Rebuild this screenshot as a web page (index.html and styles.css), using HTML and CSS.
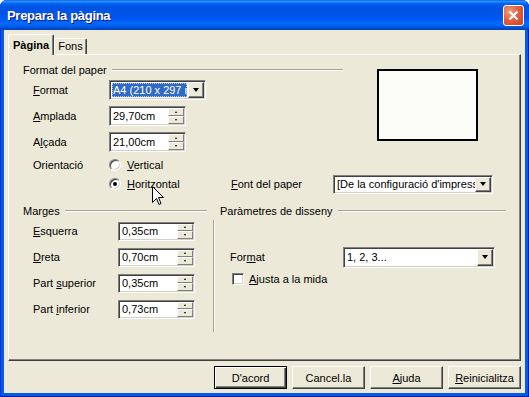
FILE: index.html
```html
<!DOCTYPE html>
<html>
<head>
 <meta charset="UTF-8">
 <title>Prepara la pàgina</title>
 <link rel="stylesheet" href="styles.css">
</head>
<body>
<div class="window">
    <div class="titlebar">
        <span class="title">Prepara la pàgina</span>
        <span class="close">
            <svg width="11" height="11" viewBox="0 0 11 11"><path d="M1.5 1.5l8 8M9.5 1.5l-8 8" stroke="#fff" stroke-width="2.2"/></svg>
        </span>
    </div>

    <div class="client">
        <div class="tabs">
            <div class="tab active">Pàgina</div>
            <div class="tab fons">Fons</div>
        </div>

        <div class="panel">
            <!-- Format del paper -->
            <div class="paper-area">
                <div class="paper">
                    <div class="group-title"><span>Format del paper</span><span class="rule"></span></div>
                    <div class="row">
                        <span class="lbl"><u>F</u>ormat</span>
                        <div class="field combo w-format">
                            <span class="value selected">A4 (210 x 297 mm)</span>
                            <span class="drop"><i class="arrow"></i></span>
                        </div>
                    </div>
                    <div class="row">
                        <span class="lbl"><u>A</u>mplada</span>
                        <div class="field spin">
                            <span class="value">29,70cm</span>
                            <span class="spinner"><span><i class="up"></i></span><span><i class="down"></i></span></span>
                        </div>
                    </div>
                    <div class="row">
                        <span class="lbl">A<u>l</u>çada</span>
                        <div class="field spin">
                            <span class="value">21,00cm</span>
                            <span class="spinner"><span><i class="up"></i></span><span><i class="down"></i></span></span>
                        </div>
                    </div>
                    <div class="row radio-row">
                        <span class="lbl">Orientació</span>
                        <span class="radio"></span><span class="opt-text"><u>V</u>ertical</span>
                    </div>
                </div>
                <div class="preview"></div>
            </div>

            <div class="row radio-row horiz">
                <span class="lbl"></span>
                <span class="option"><span class="radio checked"></span><span class="opt-text"><u>H</u>oritzontal</span></span>
                <span class="lbl-font"><u>F</u>ont del paper</span>
                <div class="field combo w-font">
                    <span class="value">[De la configuració d'impressora]</span>
                    <span class="drop"><i class="arrow"></i></span>
                </div>
            </div>

            <div class="lower">
                <!-- Marges -->
                <div class="margins">
                    <div class="group-title"><span>Marges</span><span class="rule"></span></div>
                    <div class="row">
                        <span class="lbl wide"><u>E</u>squerra</span>
                        <div class="field spin small">
                            <span class="value">0,35cm</span>
                            <span class="spinner"><span><i class="up"></i></span><span><i class="down"></i></span></span>
                        </div>
                    </div>
                    <div class="row">
                        <span class="lbl wide"><u>D</u>reta</span>
                        <div class="field spin small">
                            <span class="value">0,70cm</span>
                            <span class="spinner"><span><i class="up"></i></span><span><i class="down"></i></span></span>
                        </div>
                    </div>
                    <div class="row">
                        <span class="lbl wide">Part <u>s</u>uperior</span>
                        <div class="field spin small">
                            <span class="value">0,35cm</span>
                            <span class="spinner"><span><i class="up"></i></span><span><i class="down"></i></span></span>
                        </div>
                    </div>
                    <div class="row">
                        <span class="lbl wide">Part <u>i</u>nferior</span>
                        <div class="field spin small">
                            <span class="value">0,73cm</span>
                            <span class="spinner"><span><i class="up"></i></span><span><i class="down"></i></span></span>
                        </div>
                    </div>
                </div>

                <div class="vline"></div>

                <!-- Paràmetres de disseny -->
                <div class="design">
                    <div class="group-title"><span>Paràmetres de disseny</span><span class="rule"></span></div>
                    <div class="spacer"></div>
                    <div class="row">
                        <span class="lbl design-lbl">For<u>m</u>at</span>
                        <div class="field combo w-design">
                            <span class="value">1, 2, 3...</span>
                            <span class="drop"><i class="arrow"></i></span>
                        </div>
                    </div>
                    <div class="check-row">
                        <span class="checkbox"></span><span class="opt-text"><u>A</u>justa a la mida</span>
                    </div>
                </div>
            </div>
        </div>

        <div class="buttons">
            <button class="btn default">D'acord</button>
            <button class="btn">Cancel.la</button>
            <button class="btn"><u>A</u>juda</button>
            <button class="btn"><u>R</u>einicialitza</button>
        </div>
    </div>

    <svg class="cursor" width="12" height="20" viewBox="0 0 12 20"><path d="M0.5 0.5V16.5L4.5 12.5L7 18.5L9 17.5L6.5 11.5H11.5Z" fill="#fff" stroke="#000"/></svg>
</div>
</body>
</html>
```

FILE: styles.css
```css
* {
    margin: 0;
    padding: 0;
    box-sizing: border-box;
}

body {
    background: #fff;
    font-family: "Liberation Sans", Arial, sans-serif;
    font-size: 11px;
    color: #000;
}

.window {
    position: relative;
    width: 529px;
    height: 397px;
    display: flex;
    flex-direction: column;
    background: #0858E6;
    border-radius: 7px 7px 0 0;
    overflow: hidden;
    box-shadow: inset 1px 0 0 #0831D9, inset -1px 0 0 #001EA0, inset 0 -1px 0 #001EA0;
}

.titlebar {
    flex: none;
    height: 30px;
    display: flex;
    align-items: center;
    justify-content: space-between;
    padding: 0 5px 0 7px;
    background: linear-gradient(to bottom, #0058EE 0%, #3593FF 4%, #288EFF 6%, #127DFF 8%, #036FFC 10%, #0262EE 14%, #0057E5 20%, #0054E3 24%, #0055EB 56%, #005BF5 66%, #026AFE 76%, #0062EF 86%, #0052D6 92%, #0047C4 96%, #0046C0 100%);
}

.title {
    color: #fff;
    font-weight: bold;
    font-size: 13px;
    letter-spacing: -0.3px;
    text-shadow: 1px 1px 0 #0A1883;
}

.close {
    width: 21px;
    height: 21px;
    border: 1px solid #fff;
    border-radius: 3px;
    background: radial-gradient(circle at 30% 30%, #F09D85 0%, #E5603F 45%, #C8401F 100%);
    display: flex;
    align-items: center;
    justify-content: center;
}

.client {
    flex: 1;
    margin: 0 4px 4px;
    padding: 4px;
    background: #ECE9D8;
    display: flex;
    flex-direction: column;
}

/* tabs */
.tabs {
    display: flex;
    align-items: flex-end;
    height: 20px;
}

.tab {
    height: 16px;
    line-height: 15px;
    text-align: center;
    border: 1px solid;
    border-bottom: none;
    border-color: #fff #404040 #404040 #fff;
    box-shadow: inset -1px 0 0 #808080;
    border-radius: 2px 2px 0 0;
    background: #ECE9D8;
}

.tab.active {
    width: 46px;
    height: 21px;
    line-height: 20px;
    margin-bottom: -1px;
    font-weight: bold;
    position: relative;
    z-index: 1;
}

.tab.fons {
    width: 33px;
}

.panel {
    height: 307px;
    border: 1px solid;
    border-color: #fff #404040 #404040 #fff;
    box-shadow: inset -1px -1px 0 #808080;
    padding-left: 14px;
}

/* group headings */
.group-title {
    height: 15px;
    display: flex;
    align-items: center;
}

.rule {
    flex: 1;
    height: 2px;
    margin-left: 5px;
    border-top: 1px solid #A5A293;
    border-bottom: 1px solid #fff;
}

.paper-area {
    display: flex;
    align-items: flex-start;
}

.paper {
    width: 320px;
    padding-top: 7px;
}

.preview {
    margin: 14px 0 0 34px;
    width: 101px;
    height: 72px;
    border: 2px solid #000;
    background: #FCFCF8;
}

.row {
    height: 26px;
    display: flex;
    align-items: center;
    padding-left: 10px;
}

.radio-row {
    height: 19px;
}

.radio-row.horiz {
    height: 20px;
}

.lbl {
    width: 76px;
    flex: none;
}

.lbl.wide {
    width: 85px;
}

.lbl.design-lbl {
    width: 113px;
}

.option {
    width: 122px;
    display: flex;
    align-items: center;
}

.lbl-font {
    width: 102px;
}

.opt-text {
    margin-left: 6px;
}

/* sunken fields */
.field {
    display: flex;
    align-items: stretch;
    height: 20px;
    padding: 1px;
    background: #fff;
    border: 1px solid;
    border-color: #808080 #fff #fff #808080;
    box-shadow: inset 1px 1px 0 #404040, inset -1px -1px 0 #D4D0C8;
}

.field .value {
    flex: 1;
    display: flex;
    align-items: center;
    padding-left: 2px;
    white-space: nowrap;
    overflow: hidden;
}

.field .value.selected {
    margin: 1px;
    padding-left: 1px;
    background: #316AC5;
    color: #fff;
    outline: 1px dotted #B8CCEE;
    outline-offset: -1px;
}

.w-format {
    width: 97px;
}

.w-font {
    width: 160px;
    height: 19px;
}

.w-design {
    width: 152px;
    height: 21px;
}

.spin {
    width: 77px;
}

.spin.small {
    height: 19px;
}

.drop {
    width: 16px;
    flex: none;
    background: #ECE9D8;
    border: 1px solid;
    border-color: #fff #404040 #404040 #fff;
    box-shadow: inset -1px -1px 0 #808080;
    display: flex;
    align-items: center;
    justify-content: center;
}

.arrow {
    width: 1px;
    height: 0;
    border-left: 3px solid transparent;
    border-right: 3px solid transparent;
    border-top: 4px solid #000;
}

.spinner {
    width: 16px;
    flex: none;
    display: flex;
    flex-direction: column;
}

.spinner span {
    flex: 1;
    background: #ECE9D8;
    border: 1px solid;
    border-color: #fff #808080 #808080 #fff;
    display: flex;
    align-items: center;
    justify-content: center;
}

.up {
    width: 1px;
    border-left: 1px solid transparent;
    border-right: 1px solid transparent;
    border-bottom: 2px solid #000;
}

.down {
    width: 1px;
    border-left: 1px solid transparent;
    border-right: 1px solid transparent;
    border-top: 2px solid #000;
}

/* radio and check */
.radio {
    position: relative;
    flex: none;
    width: 12px;
    height: 12px;
    border-radius: 50%;
    background: #fff;
    border: 1px solid;
    border-color: #808080 #fff #fff #808080;
    box-shadow: inset 1px 1px 0 #404040, inset -1px -1px 0 #D4D0C8;
}

.radio.checked::after {
    content: "";
    position: absolute;
    left: 3px;
    top: 3px;
    width: 4px;
    height: 4px;
    border-radius: 50%;
    background: #000;
}

.checkbox {
    flex: none;
    width: 12px;
    height: 12px;
    background: #fff;
    border: 1px solid;
    border-color: #808080 #fff #fff #808080;
    box-shadow: inset 1px 1px 0 #404040, inset -1px -1px 0 #D4D0C8;
}

.check-row {
    height: 18px;
    display: flex;
    align-items: center;
    padding-left: 12px;
}

.check-row .opt-text {
    margin-left: 5px;
}

/* lower groups */
.lower {
    display: flex;
    margin-top: 9px;
}

.margins {
    width: 184px;
}

.vline {
    margin: 17px 0 0 6px;
    width: 2px;
    height: 112px;
    border-left: 1px solid #A5A293;
    border-right: 1px solid #fff;
}

.design {
    width: 286px;
    margin-left: 5px;
}

.spacer {
    height: 26px;
}

/* buttons */
.buttons {
    display: flex;
    justify-content: flex-end;
    gap: 5px;
    margin-top: 5px;
}

.btn {
    width: 73px;
    height: 23px;
    font-family: "Liberation Sans", Arial, sans-serif;
    font-size: 11px;
    color: #000;
    background: #ECE9D8;
    border: 1px solid;
    border-color: #fff #404040 #404040 #fff;
    box-shadow: inset -1px -1px 0 #808080;
}

.btn.default {
    border-color: #000;
    box-shadow: inset 1px 1px 0 #fff, inset -1px -1px 0 #404040, inset -2px -2px 0 #808080;
}

.cursor {
    position: absolute;
    left: 152px;
    top: 186px;
}
```
